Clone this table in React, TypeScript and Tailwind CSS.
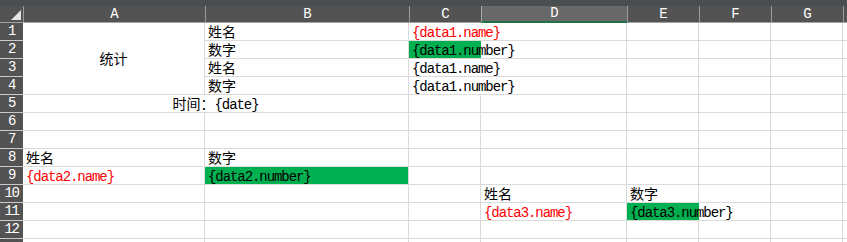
import React from "react";

// sheet look: dark chrome, 18px rows, SimSun-ish text
const Lat = ({ children }: { children: React.ReactNode }) => (
    <span className="font-['Liberation_Mono',monospace] text-[14px] tracking-[-1.07px]">{children}</span>
);

const Cell = ({ className = "", children }: { className?: string; children?: React.ReactNode }) => (
    <div className={`border-b border-[#dadada] px-[3px] leading-[17px] whitespace-nowrap overflow-visible relative ${className}`}>
        {children}
    </div>
);

const RowHead = ({ n }: { n: number }) => (
    <div className="bg-[#535353] border-b border-[#c9c9c9] text-white text-center leading-[17px] font-['Liberation_Mono',monospace] text-[14px] tracking-[-1.5px]">
        {n}
    </div>
);

const cols = ["A", "B", "C", "D", "E", "F", "G"];

const App = () => {
    return (
        <div className="w-[847px] h-[242px] overflow-hidden bg-white text-black font-['Noto_Sans_CJK_SC',sans-serif] text-[14px] grid grid-cols-[23px_182px_204px_72px_146px_72px_72px_72px_1fr] grid-rows-[6px_17px_repeat(12,18px)_1fr]">
            {/* top strip */}
            <div className="col-span-full bg-[#4b4e51]"></div>

            {/* column header */}
            <div className="bg-[#535353] border-b border-[#a3a3a3] relative">
                <svg className="absolute right-[2px] bottom-[2px]" width="10" height="10" viewBox="0 0 10 10">
                    <polygon points="10,0 10,10 0,10" fill="#e6e6e6" />
                </svg>
            </div>
            {cols.map((c) =>
                c === "D" ? (
                    <div key={c} className="bg-[#686868] border-l border-[#a8a8a8] border-b-2 border-b-[#217346] text-white text-center leading-[15px] font-['Liberation_Mono',monospace] text-[14px]">
                        {c}
                    </div>
                ) : (
                    <div key={c} className="bg-[#535353] border-l border-[#9c9c9c] border-b border-b-[#a3a3a3] text-white text-center leading-[16px] font-['Liberation_Mono',monospace] text-[14px]">
                        {c}
                    </div>
                )
            )}
            <div className="bg-[#535353] border-l border-[#9c9c9c] border-b border-b-[#a3a3a3]"></div>

            {/* row 1 */}
            <RowHead n={1} />
            <Cell className="row-span-4 border-r border-[#dadada] flex items-center justify-center">统计</Cell>
            <Cell className="border-r">姓名</Cell>
            <Cell className="text-[#ff0000]"><Lat>{"{data1.name}"}</Lat></Cell>
            <Cell className="border-r" />
            <Cell className="border-r" />
            <Cell className="border-r" />
            <Cell className="border-r" />
            <Cell />

            {/* row 2 */}
            <RowHead n={2} />
            <Cell className="border-r">数字</Cell>
            <Cell className="bg-[#00b050]"><Lat>{"{data1.number}"}</Lat></Cell>
            <Cell className="border-r" />
            <Cell className="border-r" />
            <Cell className="border-r" />
            <Cell className="border-r" />
            <Cell />

            {/* row 3 */}
            <RowHead n={3} />
            <Cell className="border-r">姓名</Cell>
            <Cell><Lat>{"{data1.name}"}</Lat></Cell>
            <Cell className="border-r" />
            <Cell className="border-r" />
            <Cell className="border-r" />
            <Cell className="border-r" />
            <Cell />

            {/* row 4 */}
            <RowHead n={4} />
            <Cell className="border-r">数字</Cell>
            <Cell><Lat>{"{data1.number}"}</Lat></Cell>
            <Cell className="border-r" />
            <Cell className="border-r" />
            <Cell className="border-r" />
            <Cell className="border-r" />
            <Cell />

            {/* row 5 */}
            <RowHead n={5} />
            <Cell className="col-span-2 border-r text-center">
                时间：<Lat>{"{date}"}</Lat>
            </Cell>
            <Cell className="border-r" />
            <Cell className="border-r" />
            <Cell className="border-r" />
            <Cell className="border-r" />
            <Cell className="border-r" />
            <Cell />

            {/* rows 6-7 */}
            {[6, 7].map((n) => (
                <React.Fragment key={n}>
                    <RowHead n={n} />
                    <Cell className="border-r" />
                    <Cell className="border-r" />
                    <Cell className="border-r" />
                    <Cell className="border-r" />
                    <Cell className="border-r" />
                    <Cell className="border-r" />
                    <Cell className="border-r" />
                    <Cell />
                </React.Fragment>
            ))}

            {/* row 8 */}
            <RowHead n={8} />
            <Cell className="border-r">姓名</Cell>
            <Cell className="border-r">数字</Cell>
            <Cell className="border-r" />
            <Cell className="border-r" />
            <Cell className="border-r" />
            <Cell className="border-r" />
            <Cell className="border-r" />
            <Cell />

            {/* row 9 */}
            <RowHead n={9} />
            <Cell className="border-r text-[#ff0000]"><Lat>{"{data2.name}"}</Lat></Cell>
            <Cell className="border-r bg-[#00b050]"><Lat>{"{data2.number}"}</Lat></Cell>
            <Cell className="border-r" />
            <Cell className="border-r" />
            <Cell className="border-r" />
            <Cell className="border-r" />
            <Cell className="border-r" />
            <Cell />

            {/* row 10 */}
            <RowHead n={10} />
            <Cell className="border-r" />
            <Cell className="border-r" />
            <Cell className="border-r" />
            <Cell className="border-r">姓名</Cell>
            <Cell className="border-r">数字</Cell>
            <Cell className="border-r" />
            <Cell className="border-r" />
            <Cell />

            {/* row 11 */}
            <RowHead n={11} />
            <Cell className="border-r" />
            <Cell className="border-r" />
            <Cell className="border-r" />
            <Cell className="border-r text-[#ff0000]"><Lat>{"{data3.name}"}</Lat></Cell>
            <Cell className="bg-[#00b050]"><Lat>{"{data3.number}"}</Lat></Cell>
            <Cell className="border-r" />
            <Cell className="border-r" />
            <Cell />

            {/* row 12 */}
            <RowHead n={12} />
            <Cell className="border-r" />
            <Cell className="border-r" />
            <Cell className="border-r" />
            <Cell className="border-r" />
            <Cell className="border-r" />
            <Cell className="border-r" />
            <Cell className="border-r" />
            <Cell />

            {/* partial row 13 */}
            <div className="bg-[#535353]"></div>
            <div className="border-r border-[#dadada]"></div>
            <div className="border-r border-[#dadada]"></div>
            <div className="border-r border-[#dadada]"></div>
            <div className="border-r border-[#dadada]"></div>
            <div className="border-r border-[#dadada]"></div>
            <div className="border-r border-[#dadada]"></div>
            <div className="border-r border-[#dadada]"></div>
            <div></div>
        </div>
    );
};

export default App;
